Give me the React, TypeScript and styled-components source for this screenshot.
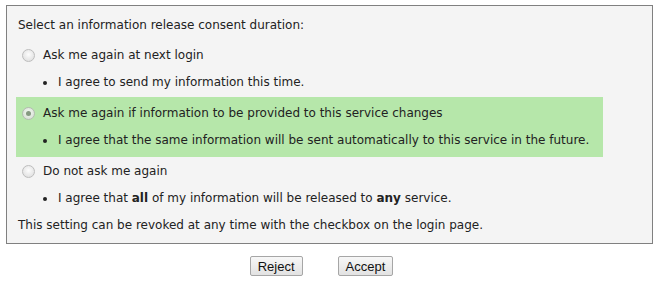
import { useState } from "react"
import styled, { createGlobalStyle } from "styled-components"

const GlobalStyle = createGlobalStyle`
    html, body {
        margin: 0;
        background: #ffffff;
    }
    body {
        font-family: "DejaVu Sans", Verdana, sans-serif;
        color: #222222;
    }
`

const Page = styled.div`
    padding: 5px 3px 0 6px;
`

const Panel = styled.div`
    border: 1px solid #808080;
    background: #f4f4f4;
    padding: 9px 9px 8px 9px;
    font-size: 12px;
`

const Prompt = styled.div`
    line-height: 20px;
    padding-left: 2px;
    margin-bottom: 4px;
`

const OptionGroup = styled.div<{ $selected: boolean }>`
    display: table;
    padding: 6px 14px 7px 6px;
    margin-bottom: -2px;
    background: ${p => (p.$selected ? "#b6e7aa" : "transparent")};
`

const RadioRow = styled.label`
    display: flex;
    align-items: center;
    line-height: 20px;
    cursor: pointer;
`

const RadioInput = styled.input.attrs({ type: "radio" })`
    appearance: none;
    margin: 0 8px 0 0;
    width: 13px;
    height: 13px;
    border-radius: 50%;
    border: 1px solid #b4b4b4;
    background: radial-gradient(circle at 50% 40%, #ffffff 0%, #e6e6e6 60%, #d8d8d8 100%);
    box-sizing: border-box;
    position: relative;
    opacity: 0.85;

    &:checked::after {
        content: "";
        position: absolute;
        left: 3px;
        top: 3px;
        width: 5px;
        height: 5px;
        border-radius: 50%;
        background: #7d8c7a;
    }
`

const Bullets = styled.ul`
    list-style: none;
    margin: 7px 0 0 0;
    padding: 0 0 0 21px;
`

const Bullet = styled.li`
    position: relative;
    line-height: 20px;
    padding-left: 15px;

    &::before {
        content: "";
        position: absolute;
        left: 0;
        top: 9px;
        width: 4px;
        height: 4px;
        border-radius: 50%;
        background: #222222;
    }
`

const Note = styled.div`
    line-height: 20px;
    padding-left: 2px;
    margin-top: 2px;
`

const Actions = styled.div`
    display: flex;
    justify-content: center;
    gap: 35px;
    padding: 12px 16px 0 0;
`

const Button = styled.button`
    font-family: "Liberation Sans", Arial, sans-serif;
    font-size: 13px;
    color: #111111;
    height: 20px;
    padding: 0 7px;
    border: 1px solid #a6a6a6;
    border-radius: 2px;
    background: linear-gradient(#f7f7f7, #e2e2e2);
    cursor: pointer;
`

const options = [
    {
        id: "login",
        label: "Ask me again at next login",
        detail: <>I agree to send my information this time.</>,
    },
    {
        id: "changes",
        label: "Ask me again if information to be provided to this service changes",
        detail: <>I agree that the same information will be sent automatically to this service in the future.</>,
    },
    {
        id: "never",
        label: "Do not ask me again",
        detail: <>I agree that <b>all</b> of my information will be released to <b>any</b> service.</>,
    },
]

export default function App() {
    const [selected, setSelected] = useState("changes")

    return (
        <Page>
            <GlobalStyle />
            <Panel>
                <Prompt>Select an information release consent duration:</Prompt>
                {options.map(option => (
                    <OptionGroup key={option.id} $selected={selected === option.id}>
                        <RadioRow>
                            <RadioInput
                                name="duration"
                                checked={selected === option.id}
                                onChange={() => setSelected(option.id)}
                            />
                            {option.label}
                        </RadioRow>
                        <Bullets>
                            <Bullet>{option.detail}</Bullet>
                        </Bullets>
                    </OptionGroup>
                ))}
                <Note>This setting can be revoked at any time with the checkbox on the login page.</Note>
            </Panel>
            <Actions>
                <Button>Reject</Button>
                <Button>Accept</Button>
            </Actions>
        </Page>
    )
}
